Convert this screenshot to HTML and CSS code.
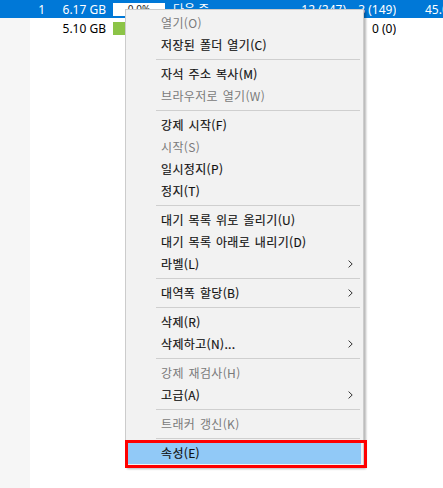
FILE: index.html
```html
<!DOCTYPE html>
<html lang="ko">
<head>
<meta charset="utf-8">
<title>Context menu</title>
<link rel="stylesheet" href="styles.css">
</head>
<body>
<div class="page">
  <div class="list">
    <div class="row sel">
      <span class="c-gut"></span>
      <span class="c-idx">1</span>
      <span class="c-size">6.17 GB</span>
      <span class="c-prog"><span class="bar"><span class="fill" style="width:0%"></span><span class="pct">0.0%</span></span></span>
      <span class="c-status">다운 중</span>
      <span class="c-seeds">12 (247)</span>
      <span class="c-peers">3 (149)</span>
      <span class="c-speed">45.0 KiB/s</span>
    </div>
    <div class="row">
      <span class="c-gut"></span>
      <span class="c-idx"></span>
      <span class="c-size">5.10 GB</span>
      <span class="c-prog"><span class="bar"><span class="fill green" style="width:40%"></span></span></span>
      <span class="c-status"></span>
      <span class="c-seeds"></span>
      <span class="c-peers">0 (0)</span>
      <span class="c-speed"></span>
    </div>
  </div>

  <div class="menu">
    <div class="item dis">열기(O)</div>
    <div class="item">저장된 폴더 열기(C)</div>
    <div class="sep"></div>
    <div class="item">자석 주소 복사(M)</div>
    <div class="item dis">브라우저로 열기(W)</div>
    <div class="sep"></div>
    <div class="item">강제 시작(F)</div>
    <div class="item dis">시작(S)</div>
    <div class="item">일시정지(P)</div>
    <div class="item">정지(T)</div>
    <div class="sep"></div>
    <div class="item">대기 목록 위로 올리기(U)</div>
    <div class="item">대기 목록 아래로 내리기(D)</div>
    <div class="item">라벨(L)<svg class="chev" viewBox="0 0 5 8" width="5" height="8"><path d="M0.6 0.6 L4.2 4 L0.6 7.4" /></svg></div>
    <div class="sep"></div>
    <div class="item">대역폭 할당(B)<svg class="chev" viewBox="0 0 5 8" width="5" height="8"><path d="M0.6 0.6 L4.2 4 L0.6 7.4" /></svg></div>
    <div class="sep"></div>
    <div class="item">삭제(R)</div>
    <div class="item">삭제하고(N)...<svg class="chev" viewBox="0 0 5 8" width="5" height="8"><path d="M0.6 0.6 L4.2 4 L0.6 7.4" /></svg></div>
    <div class="sep"></div>
    <div class="item dis">강제 재검사(H)</div>
    <div class="item">고급(A)<svg class="chev" viewBox="0 0 5 8" width="5" height="8"><path d="M0.6 0.6 L4.2 4 L0.6 7.4" /></svg></div>
    <div class="sep"></div>
    <div class="item dis">트래커 갱신(K)</div>
    <div class="sep"></div>
    <div class="item hot">속성(E)</div>
  </div>
  <div class="mark"></div>
</div>
</body>
</html>
```

FILE: styles.css
```css
html, body {
  margin: 0;
  padding: 0;
  width: 443px;
  height: 488px;
  overflow: hidden;
  background: #ffffff;
}

.page {
  position: relative;
  width: 443px;
  height: 488px;
  overflow: hidden;
  background: linear-gradient(to right, #f6f6f6 30px, #ffffff 30px);
  font-family: "Noto Sans", "Noto Sans CJK KR", sans-serif;
  font-size: 12px;
  color: #000;
}

.list {
  margin-top: -1px;
  display: flex;
  flex-direction: column;
}

.row {
  display: flex;
  height: 19px;
  white-space: nowrap;
}

.row.sel {
  background: #0078d7;
  color: #ffffff;
}

.row > span {
  display: block;
  box-sizing: border-box;
  height: 19px;
  padding-top: 3px;
  line-height: 16px;
  overflow: hidden;
  flex: none;
}

.row > .c-gut { width: 30px; }
.row > .c-idx { width: 18px; text-align: right; padding-right: 3px; }
.row > .c-size { width: 60px; text-align: right; padding-right: 2px; }
.row > .c-prog { width: 62px; padding: 0 0 0 5px; }
.row > .c-status { width: 120px; padding-left: 3px; }
.row > .c-seeds { width: 56px; text-align: right; }
.row > .c-peers { width: 50px; text-align: right; }
.row > .c-speed { width: 60px; padding-left: 29px; overflow: visible; }

.bar {
  position: relative;
  display: block;
  width: 52px;
  height: 13px;
  margin-top: 4px;
  background: #ffffff;
  overflow: hidden;
}

.fill {
  display: block;
  height: 100%;
}

.fill.green { background: #8cc447; }

.pct {
  position: absolute;
  left: 0;
  right: 0;
  top: 0;
  text-align: center;
  font-size: 10px;
  line-height: 13px;
  color: #222;
}

.menu {
  position: absolute;
  left: 125px;
  top: 9px;
  width: 239px;
  box-sizing: border-box;
  border: 1px solid #cccccc;
  padding: 2px;
  background: #f2f2f2;
  box-shadow: 2px 2px 2px rgba(0, 0, 0, 0.28);
  font-family: "Noto Sans CJK KR", "Noto Sans", sans-serif;
  font-size: 12px;
  display: flex;
  flex-direction: column;
}

.item {
  display: flex;
  align-items: center;
  justify-content: space-between;
  height: 22px;
  padding: 0 8px 0 33px;
  line-height: 22px;
  color: #111111;
  letter-spacing: 0.35px;
  word-spacing: 1px;
  white-space: nowrap;
  -webkit-text-stroke: 0.15px currentColor;
}

.item.dis { color: #7a7a7a; -webkit-text-stroke: 0; }

.item.hot { background: #91c9f7; }

.chev {
  flex: none;
  fill: none;
  stroke: #333333;
  stroke-width: 1;
}

.sep {
  height: 1px;
  margin: 3px 1px 3px 28px;
  background: #cfcfcf;
}

.mark {
  position: absolute;
  left: 125px;
  top: 440px;
  width: 242px;
  height: 28px;
  box-sizing: border-box;
  border: 3px solid #ff0000;
}
```
